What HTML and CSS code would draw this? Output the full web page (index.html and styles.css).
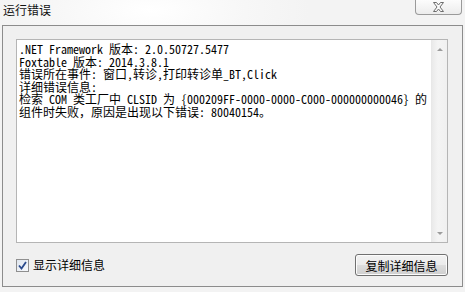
FILE: index.html
```html
<!DOCTYPE html>
<html lang="zh-CN">
  <head>
    <meta charset="utf-8">
    <title>运行错误</title>
    <link rel="stylesheet" href="styles.css">
  </head>
  <body>
    <div class="window">
      <div class="titlebar">
        <span class="title">运行错误</span>
        <div class="close">
          <svg width="13" height="10" viewBox="0 0 13 10">
            <path d="M1.5 0.5h3l2 2.5 2-2.5h3l-3.5 4.5 3.5 4.5h-3l-2-2.5-2 2.5h-3l3.5-4.5z" fill="#fafafa" stroke="#6d6d6d" stroke-width="1" stroke-linejoin="round"/>
          </svg>
        </div>
      </div>
      <div class="client">
        <div class="textbox">
          <pre class="details">.NET Framework 版本: 2.0.50727.5477
Foxtable 版本: 2014.3.8.1
错误所在事件: 窗口,转诊,打印转诊单_BT,Click
详细错误信息:
检索 COM 类工厂中 CLSID 为 {000209FF-0000-0000-C000-000000000046} 的
组件时失败，原因是出现以下错误: 80040154。</pre>
          <div class="scrollbar">
            <span class="arrow up"></span>
            <span class="arrow down"></span>
          </div>
        </div>
        <div class="footer">
          <label class="check">
            <span class="box">
              <svg width="9" height="9" viewBox="0 0 9 9">
                <path d="M1 4.5l2.5 3 4.5-6.5" fill="none" stroke="#2a4a8c" stroke-width="1.8"/>
              </svg>
            </span>
            显示详细信息
          </label>
          <button class="btn">复制详细信息</button>
        </div>
      </div>
    </div>
  </body>
</html>
```

FILE: styles.css
```css
html, body {
  margin: 0;
  font-size: 12px;
  font-family: "Noto Sans CJK SC", "Liberation Sans", sans-serif;
  color: #000;
}
.window {
  width: 465px;
  height: 292px;
  display: flex;
  flex-direction: column;
  background: radial-gradient(ellipse 160px 60px at 150px 10px, #fff 0%, #f7f7f7 60%, #f3f3f3 100%);
}
.titlebar {
  height: 25px;
  display: flex;
  align-items: flex-start;
  flex-shrink: 0;
}
.title {
  margin: 2px 0 0 3px;
  line-height: 16px;
  color: #111;
}
.close {
  margin-left: auto;
  margin-right: 3px;
  width: 45px;
  height: 14px;
  border: 1px solid #9a9a9a;
  border-top: none;
  border-radius: 0 0 4px 4px;
  background: linear-gradient(#fcfcfc, #ececec);
  display: flex;
  align-items: center;
  justify-content: center;
}
.client {
  margin: 0 2px;
  height: 262px;
  border: 1px solid #8c8c8c;
  background: #f0f0f0;
  padding: 13px 14px 0 13px;
  box-sizing: border-box;
}
.textbox {
  height: 204px;
  border: 1px solid #b5b5b5;
  background: #fff;
  display: flex;
  box-sizing: border-box;
}
.details {
  flex: 1;
  margin: 0;
  padding: 3px 0 0 2px;
  font-family: "Noto Sans Mono CJK SC", "Liberation Mono", "Noto Sans CJK SC", monospace;
  font-size: 12px;
  line-height: 12.6px;
  white-space: pre;
  overflow: hidden;
}
.scrollbar {
  width: 15px;
  border-left: 1px solid #e8e8e8;
  background: linear-gradient(90deg, #eaeaea, #f4f4f4 40%, #f0f0f0);
  display: flex;
  flex-direction: column;
  justify-content: space-between;
  align-items: center;
  padding: 8px 0 7px;
}
.arrow {
  width: 0;
  height: 0;
  border-left: 3px solid transparent;
  border-right: 3px solid transparent;
}
.arrow.up {
  border-bottom: 3px solid #9c9c9c;
}
.arrow.down {
  border-top: 3px solid #9c9c9c;
}
.footer {
  display: flex;
  align-items: flex-start;
  justify-content: space-between;
  margin-top: 11px;
}
.check {
  display: flex;
  align-items: center;
  gap: 4px;
  margin-top: 4px;
  line-height: 14px;
}
.box {
  width: 11px;
  height: 11px;
  border: 1px solid #8f8f8f;
  background: linear-gradient(135deg, #dfe6ef, #f7f9fc);
  display: flex;
  align-items: center;
  justify-content: center;
}
.btn {
  width: 93px;
  height: 22px;
  padding: 0;
  border: 1px solid #707070;
  border-radius: 3px;
  background: linear-gradient(#f2f2f2 0%, #ebebeb 50%, #dddddd 51%, #cfcfcf 100%);
  font: inherit;
  font-size: 12px;
  color: #000;
  box-shadow: inset 0 0 0 1px #fcfcfc;
}
```
